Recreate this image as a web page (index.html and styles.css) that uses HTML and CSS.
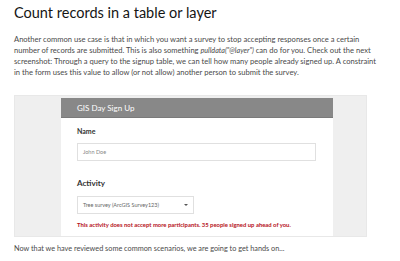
FILE: index.html
```html
<!DOCTYPE html>
<html lang="en">
<head>
    <meta charset="UTF-8">
    <meta name="viewport" content="width=device-width, initial-scale=1.0">
    <title>Count records in a table or layer</title>
    <link rel="stylesheet" href="styles.css">
</head>
<body>
    <div class="article">
        <h1>Count records in a table or layer</h1>
        <p class="intro">Another common use case is that in which you want a survey to stop accepting responses once a certain<br>
            number of records are submitted. This is also something <em>pulldata("@layer")</em> can do for you. Check out the next<br>
            screenshot: Through a query to the signup table, we can tell how many people already signed up. A constraint<br>
            in the form uses this value to allow (or not allow) another person to submit the survey.</p>

        <div class="screenshot">
            <div class="form-card">
                <div class="form-header">GIS Day Sign Up</div>
                <div class="form-body">
                    <div class="question">
                        <label class="question-label">Name</label>
                        <div class="text-input">John Doe</div>
                    </div>
                    <div class="question">
                        <label class="question-label activity">Activity</label>
                        <div class="select-input">
                            <span>Tree survey (ArcGIS Survey123)</span>
                            <span class="caret"></span>
                        </div>
                        <div class="error-message">This activity does not accept more participants. 35 people signed up ahead of you.</div>
                    </div>
                </div>
            </div>
        </div>

        <p class="outro">Now that we have reviewed some common scenarios, we are going to get hands on...</p>
    </div>
</body>
</html>
```

FILE: styles.css
```css
:root {
    --text: #4a4a4a;
    --title: #151515;
    --gray-bg: #efefef;
    --header: #888888;
    --error: #b5121b;
}

* {
    margin: 0;
    padding: 0;
    box-sizing: border-box;
}

body {
    font-family: Lato, "Open Sans", sans-serif;
    color: var(--text);
    background: white;
}

.article {
    width: 367px;
    padding: 4px 0 0 14px;
}

h1 {
    font-size: 14.5px;
    font-weight: 400;
    color: var(--title);
    line-height: 18px;
    margin-bottom: 12px;
}

.intro {
    font-size: 7.6px;
    line-height: 10.5px;
    margin-bottom: 18px;
    white-space: nowrap;
}

.intro em {
    font-size: 7.2px;
}

.screenshot {
    background: var(--gray-bg);
    border: 1px solid #e8e8e8;
    padding: 2px 33px 0 46px;
    height: 142px;
    overflow: hidden;
}

.form-card {
    background: white;
    height: 100%;
}

.form-header {
    background: var(--header);
    color: white;
    font-size: 8px;
    height: 20px;
    line-height: 20px;
    padding-left: 16px;
    border-bottom: 1px solid #7a7a7a;
}

.form-body {
    padding: 9px 16px 0 16px;
}

.question-label {
    display: block;
    font-size: 7px;
    font-weight: 700;
    color: #333;
    margin-bottom: 8px;
}

.question-label.activity {
    font-size: 8px;
    margin-top: 17px;
}

.text-input {
    width: 239px;
    height: 18px;
    border: 1px solid #e0e0e0;
    font-size: 5.5px;
    color: #888;
    line-height: 16px;
    padding-left: 5px;
}

.select-input {
    width: 117px;
    height: 18px;
    border: 1px solid #e0e0e0;
    font-size: 5.5px;
    color: #666;
    display: flex;
    align-items: center;
    justify-content: space-between;
    padding: 0 5px;
}

.caret {
    width: 0;
    height: 0;
    border-left: 2px solid transparent;
    border-right: 2px solid transparent;
    border-top: 2.5px solid #555;
}

.error-message {
    font-size: 5.9px;
    font-weight: 700;
    color: var(--error);
    margin-top: 7px;
}

.outro {
    font-size: 7.3px;
    line-height: 10px;
    margin-top: 7px;
}
```
